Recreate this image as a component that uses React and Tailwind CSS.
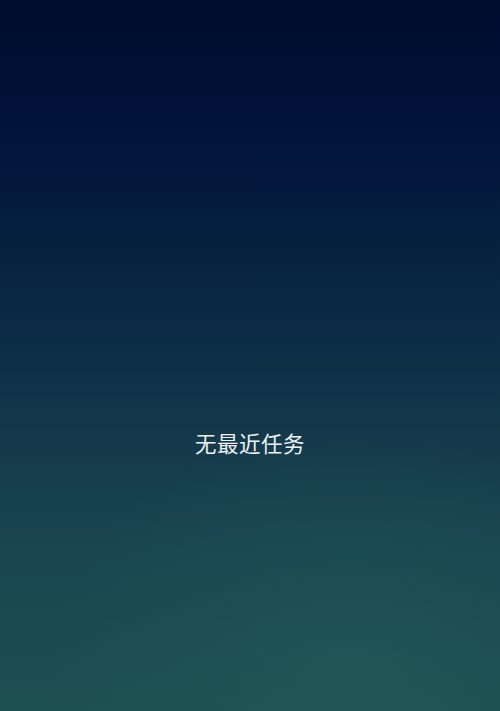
export default function App() {
  return (
    <div className="relative w-[500px] h-[711px] overflow-hidden bg-[linear-gradient(to_bottom,#000c30_0%,#02143a_20%,#0a2a45_45%,#153a4b_62%,#194650_78%,#1d5051_100%)]">
      <div className="absolute inset-0 bg-[radial-gradient(ellipse_60%_35%_at_70%_95%,rgba(40,100,95,0.35),transparent)]" />
      <div className="relative flex justify-center pt-[430px]">
        <span className="text-[21.5px] leading-[26px] text-[#eef2f4] tracking-[0.5px] font-['Noto_Sans_CJK_SC',sans-serif]">
          无最近任务
        </span>
      </div>
    </div>
  );
}
